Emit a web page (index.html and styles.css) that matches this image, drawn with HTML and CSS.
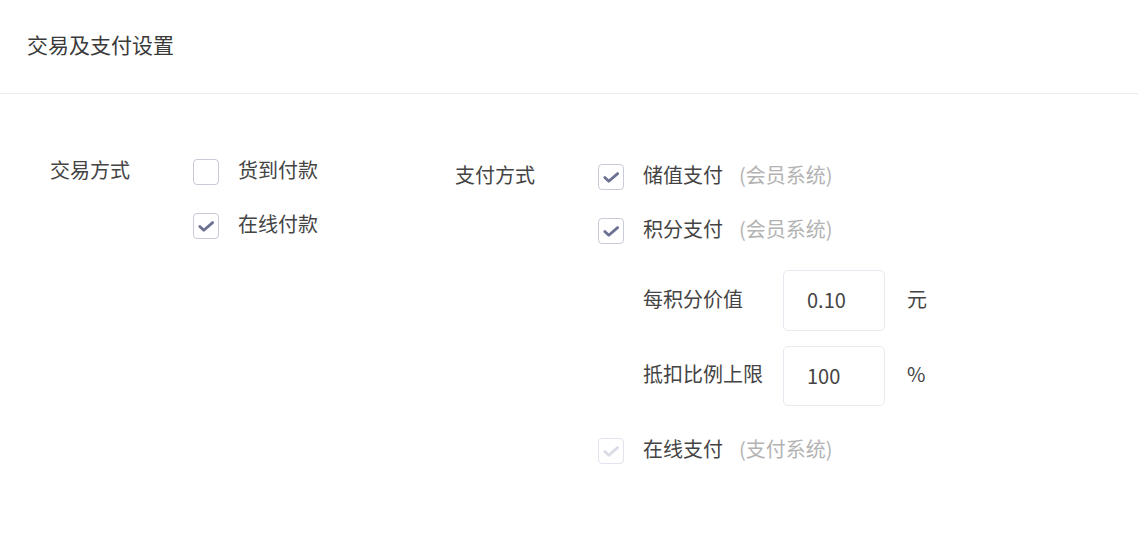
FILE: index.html
```html
<!DOCTYPE html>
<html lang="zh">
<head>
<meta charset="utf-8">
<link rel="stylesheet" href="styles.css">
</head>
<body>
<div class="page">
  <div class="header">交易及支付设置</div>
  <div class="content">
    <div class="group group-trade">
      <div class="label"><span>交易方式</span></div>
      <div class="options">
        <div class="row">
          <span class="cb"></span>
          <span class="text">货到付款</span>
        </div>
        <div class="row">
          <span class="cb checked"><svg viewBox="0 0 26 26"><path d="M6.8 13.4 L10.8 17.2 L19.6 9.6"/></svg></span>
          <span class="text">在线付款</span>
        </div>
      </div>
    </div>
    <div class="group group-pay">
      <div class="label"><span>支付方式</span></div>
      <div class="options">
        <div class="row">
          <span class="cb checked"><svg viewBox="0 0 26 26"><path d="M6.8 13.4 L10.8 17.2 L19.6 9.6"/></svg></span>
          <span class="text">储值支付</span>
          <span class="hint">(会员系统)</span>
        </div>
        <div class="row">
          <span class="cb checked"><svg viewBox="0 0 26 26"><path d="M6.8 13.4 L10.8 17.2 L19.6 9.6"/></svg></span>
          <span class="text">积分支付</span>
          <span class="hint">(会员系统)</span>
        </div>
        <div class="sub">
          <div class="field">
            <span class="flabel">每积分价值</span>
            <span class="input">0.10</span>
            <span class="unit">元</span>
          </div>
          <div class="field">
            <span class="flabel">抵扣比例上限</span>
            <span class="input">100</span>
            <span class="unit">%</span>
          </div>
        </div>
        <div class="row">
          <span class="cb checked disabled"><svg viewBox="0 0 26 26"><path d="M6.8 13.4 L10.8 17.2 L19.6 9.6"/></svg></span>
          <span class="text">在线支付</span>
          <span class="hint">(支付系统)</span>
        </div>
      </div>
    </div>
  </div>
</div>
</body>
</html>
```

FILE: styles.css
```css
* { box-sizing: border-box; }
html, body { margin: 0; padding: 0; background: #fff; }
body {
  font-family: "Noto Sans CJK SC", "Noto Sans", sans-serif;
  color: #444;
}
.page { width: 1138px; }
.header {
  height: 94px;
  padding-left: 27px;
  display: flex;
  align-items: center;
  font-size: 21px;
  color: #3a3a3a;
  border-bottom: 1px solid #ececec;
  padding-bottom: 5px;
}
.content {
  display: flex;
  padding-left: 50px;
  padding-top: 65px;
}
.group { display: flex; align-items: flex-start; }
.group-trade { width: 405px; }
.group-pay { margin-top: 5px; }
.label {
  width: 143px;
  height: 26px;
  display: flex;
  align-items: center;
  font-size: 20px;
  color: #444;
}
.label span, .text, .hint, .flabel, .unit {
  line-height: 1;
  margin-bottom: 4px;
}
.options { display: flex; flex-direction: column; }
.row {
  display: flex;
  align-items: center;
  height: 26px;
  margin-bottom: 28px;
}
.row:last-child { margin-bottom: 0; }
.cb {
  width: 26px;
  height: 26px;
  border: 1px solid #c9cbd8;
  border-radius: 4px;
  background: #fff;
  flex: none;
  overflow: hidden;
}
.cb svg { display: block; width: 26px; height: 26px; margin: -1px 0 0 -1px; }
.cb path {
  fill: none;
  stroke: #6d7192;
  stroke-width: 2.8;
  stroke-linecap: round;
  stroke-linejoin: round;
}
.cb.disabled { border-color: #e2e3ec; }
.cb.disabled path { stroke: #d9dbe6; }
.text {
  margin-left: 19px;
  font-size: 20px;
  color: #444;
}
.hint {
  margin-left: 16px;
  font-size: 20px;
  color: #b3b3b3;
}
.sub {
  margin-left: 45px;
  margin-top: -2px;
  margin-bottom: 32px;
  display: flex;
  flex-direction: column;
  gap: 15px;
}
.field { display: flex; align-items: center; }
.flabel {
  width: 140px;
  font-size: 20px;
  color: #444;
}
.input {
  width: 102px;
  height: 61px;
  border: 1px solid #e8e8f0;
  border-radius: 5px;
  display: flex;
  align-items: center;
  padding-left: 23px;
  padding-bottom: 2px;
  font-size: 20px;
  color: #444;
}
.field + .field .input { height: 60px; }
.unit {
  margin-left: 22px;
  font-size: 20px;
  color: #444;
}
```
